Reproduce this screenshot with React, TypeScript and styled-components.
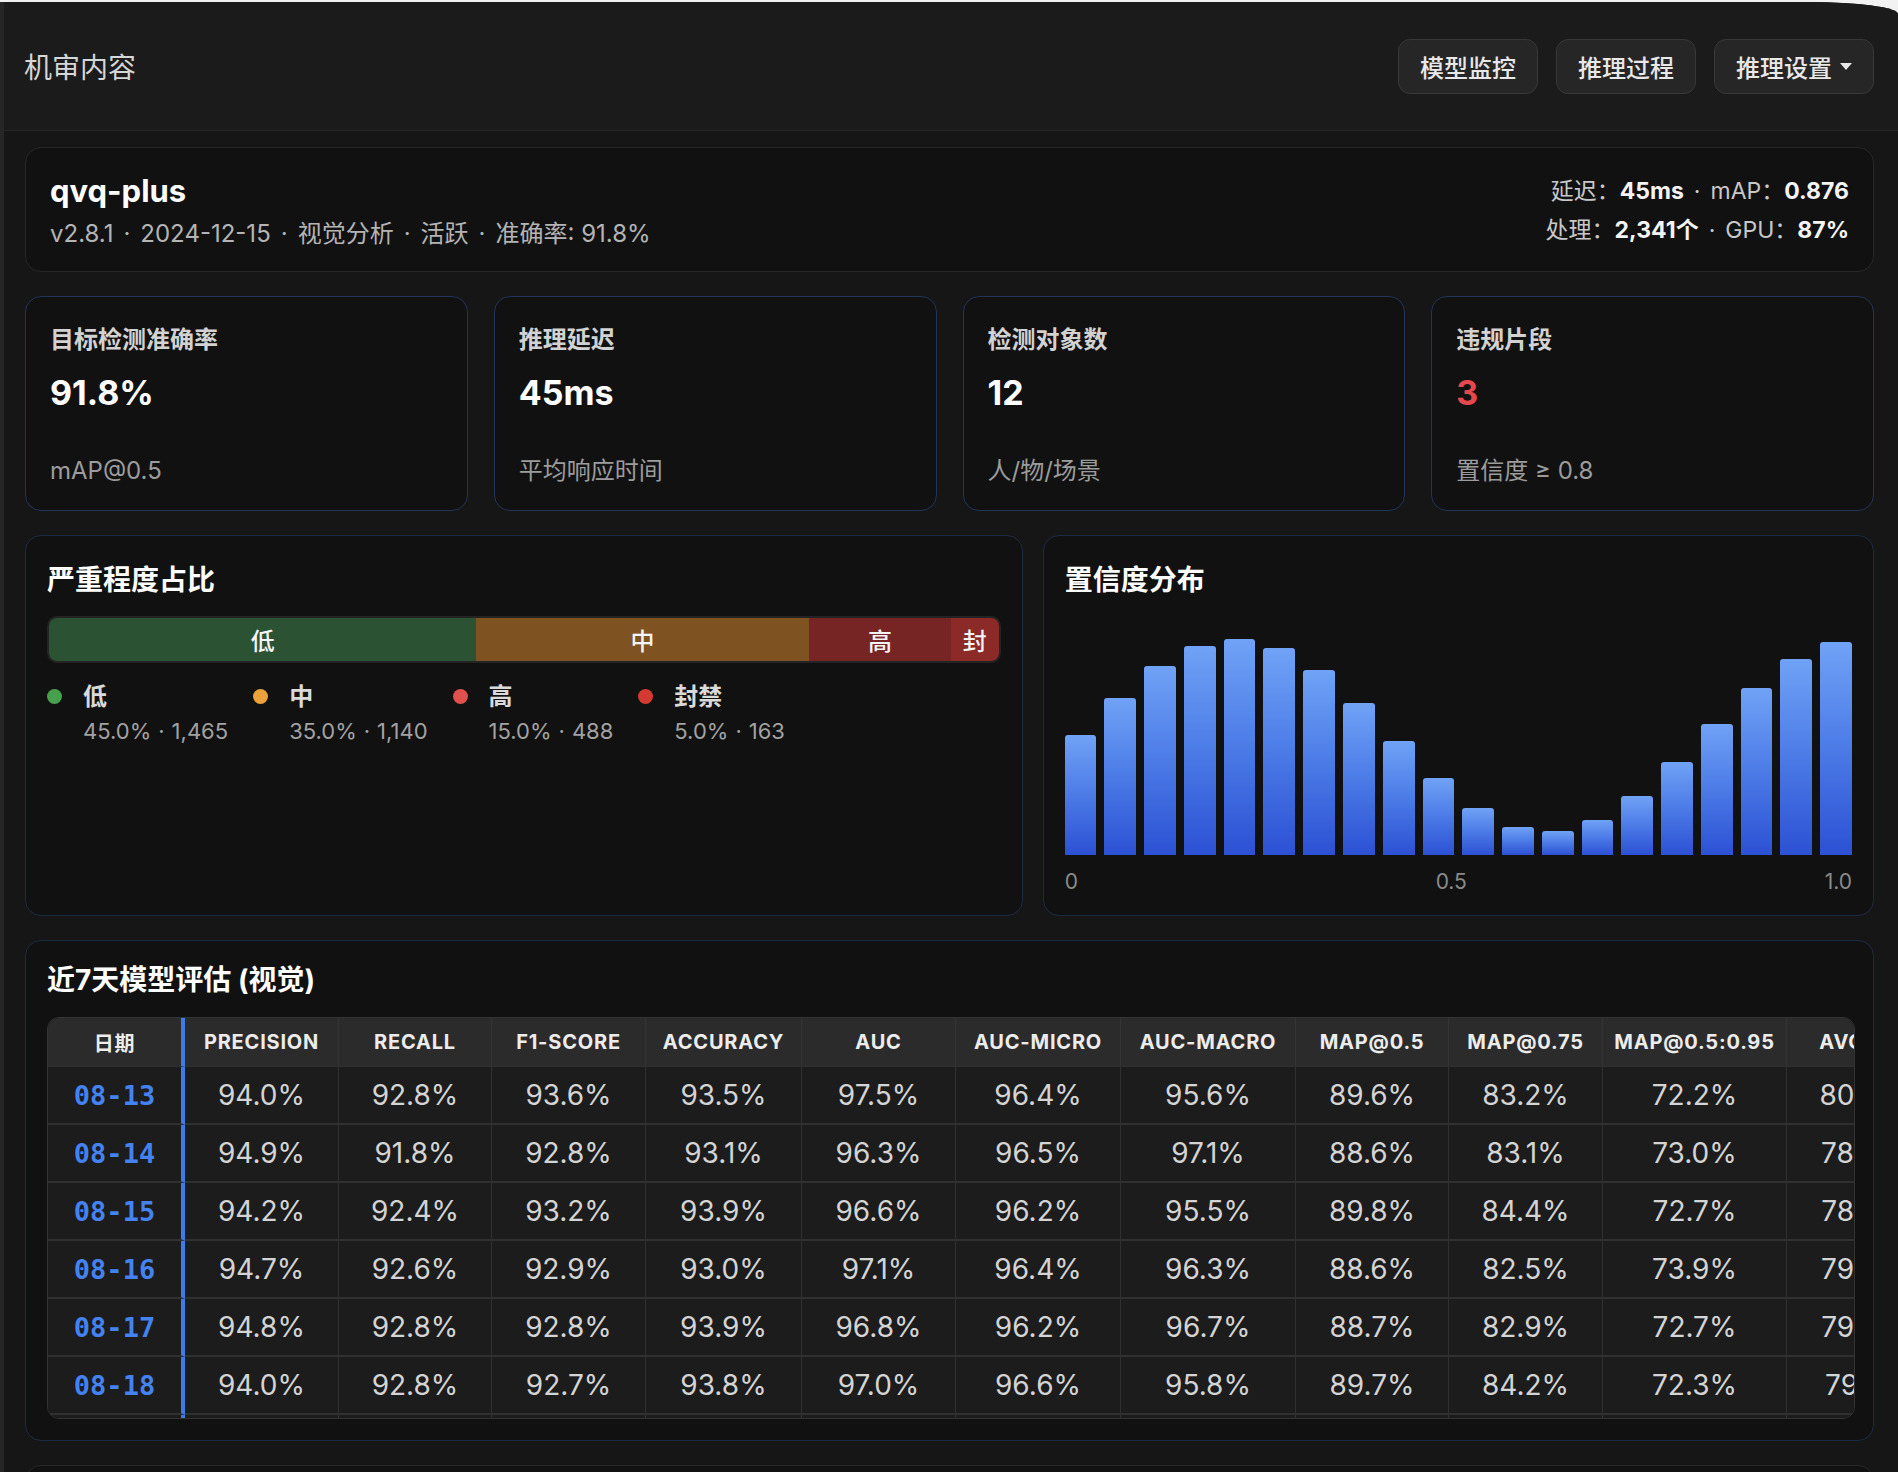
import React from "react";
import styled, { createGlobalStyle } from "styled-components";

const GlobalStyle = createGlobalStyle`
  html, body { margin: 0; padding: 0; background: #f2f2f2; }
  body {
    font-family: Inter, "Noto Sans CJK SC", sans-serif;
    -webkit-font-smoothing: antialiased;
  }
  * { box-sizing: border-box; }
`;

const Shell = styled.div`
  margin-top: 2px;
  min-height: 1470px;
  background: #161616;
  border-left: 4px solid #262626;
  border-top-right-radius: 90px 12px;
  overflow: hidden;
`;

const Header = styled.header`
  height: 129px;
  background: #1b1b1b;
  border-bottom: 1px solid #262626;
  display: flex;
  align-items: center;
  justify-content: space-between;
  padding: 0 24px 0 20px;
`;

const PageTitle = styled.h1`
  margin: 0;
  font-size: 28px;
  font-weight: 400;
  color: #d6d6d6;
`;

const Toolbar = styled.div`
  display: flex;
  gap: 18px;
`;

const ToolButton = styled.button`
  height: 55px;
  padding: 0 21px;
  display: flex;
  align-items: center;
  gap: 8px;
  background: #262626;
  border: 1px solid #383838;
  border-radius: 12px;
  color: #e8e8e8;
  font-family: Inter, "Noto Sans CJK SC", sans-serif;
  font-size: 24px;
  font-weight: 500;
`;

const Caret = styled.span`
  width: 0;
  height: 0;
  border-left: 6px solid transparent;
  border-right: 6px solid transparent;
  border-top: 7px solid #e8e8e8;
`;

const Main = styled.main`
  padding: 16px 24px 0 21px;
  display: flex;
  flex-direction: column;
  gap: 24px;
`;

const Card = styled.section<{ $tone?: "gray" | "navy" | "blue" }>`
  background: #111111;
  border: 1px solid
    ${(p) => (p.$tone === "gray" ? "#272727" : p.$tone === "blue" ? "#22345a" : "#1e2a44")};
  border-radius: 16px;
`;

const ModelCard = styled(Card)`
  height: 125px;
  padding: 23px 24px 20px;
  display: flex;
  justify-content: space-between;
  align-items: flex-start;
`;

const ModelName = styled.div`
  font-size: 31px;
  line-height: 40px;
  font-weight: 700;
  color: #ffffff;
`;

const ModelMeta = styled.div`
  margin-top: 6px;
  font-size: 24px;
  line-height: 34px;
  color: #b4b4b4;
`;

const Sep = styled.span<{ $tight?: boolean }>`
  margin: 0 ${(p) => (p.$tight ? "7px" : "10px")};
`;

const StatLines = styled.div`
  padding-top: 1px;
  text-align: right;
  font-size: 23px;
  line-height: 39px;
  color: #c8c8c8;
`;

const Strong = styled.b`
  font-weight: 700;
  color: #f4f4f4;
`;

const MetricGrid = styled.div`
  display: grid;
  grid-template-columns: repeat(4, 1fr);
  gap: 26px;
`;

const MetricCard = styled(Card)`
  height: 215px;
  padding: 25px 24px 21px;
  display: flex;
  flex-direction: column;
`;

const MetricLabel = styled.div`
  font-size: 24px;
  line-height: 36px;
  font-weight: 600;
  color: #d2d2d2;
`;

const MetricValue = styled.div<{ $alert?: boolean }>`
  margin-top: 13px;
  font-size: 34px;
  line-height: 44px;
  font-weight: 700;
  color: ${(p) => (p.$alert ? "#e5484d" : "#ffffff")};
`;

const MetricSub = styled.div`
  margin-top: auto;
  font-size: 24px;
  line-height: 36px;
  color: #9c9c9c;
`;

const ChartRow = styled.div`
  display: grid;
  grid-template-columns: 6fr 5fr;
  gap: 20px;
`;

const PanelCard = styled(Card)`
  padding: 24px 21px 18px;
  height: 381px;
`;

const SectionTitle = styled.h2`
  margin: 0;
  font-size: 28px;
  line-height: 40px;
  font-weight: 700;
  color: #ffffff;
`;

const StackBar = styled.div`
  margin-top: 16px;
  height: 47px;
  display: flex;
  border: 2px solid #242424;
  border-radius: 10px;
  overflow: hidden;
`;

const Segment = styled.div<{ $color: string }>`
  background: ${(p) => p.$color};
  display: flex;
  align-items: center;
  justify-content: center;
  color: #f4f4f4;
  font-size: 24px;
  font-weight: 500;
  white-space: nowrap;
  overflow: hidden;
`;

const Legend = styled.div`
  margin-top: 16px;
  display: flex;
  gap: 25px;
`;

const LegendItem = styled.div`
  display: grid;
  grid-template-columns: 15px auto;
  column-gap: 21px;
`;

const Dot = styled.span<{ $color: string }>`
  width: 15px;
  height: 15px;
  margin-top: 10px;
  border-radius: 50%;
  background: ${(p) => p.$color};
`;

const LegendLabel = styled.div`
  font-size: 24px;
  line-height: 36px;
  font-weight: 700;
  color: #dadada;
`;

const LegendValue = styled.div`
  font-size: 22px;
  line-height: 32px;
  color: #a2a2a2;
`;

const Bars = styled.div`
  margin-top: 15px;
  height: 240px;
  display: flex;
  align-items: flex-end;
  gap: 8px;
`;

const Bar = styled.div`
  flex: 1;
  border-radius: 3px 3px 0 0;
  background: linear-gradient(180deg, #70a2f6 0%, #4f7fe8 45%, #2c51d4 100%);
`;

const Axis = styled.div`
  margin-top: 12px;
  display: flex;
  justify-content: space-between;
  font-size: 21px;
  line-height: 30px;
  color: #8a8a8a;
`;

const TableCard = styled(Card)`
  height: 501px;
  padding: 19px 18px 21px 21px;
`;

const TableScroll = styled.div`
  margin-top: 17px;
  height: 402px;
  border: 1px solid #333333;
  border-radius: 12px;
  overflow: hidden;
`;

const Table = styled.table`
  table-layout: fixed;
  border-collapse: separate;
  border-spacing: 0;
  width: 2053px;
`;

const Col = styled.col<{ $w: number }>`
  width: ${(p) => p.$w}px;
`;

const Th = styled.th<{ $date?: boolean }>`
  height: 49px;
  padding: 0;
  background: #2b2b2b;
  color: #ececec;
  font-size: 20px;
  font-weight: 700;
  letter-spacing: 0.8px;
  text-transform: uppercase;
  text-align: center;
  white-space: nowrap;
  border-right: ${(p) => (p.$date ? "4px solid #3f7be8" : "1px solid #343434")};
  border-bottom: 1px solid #2f2f2f;
`;

const Td = styled.td<{ $date?: boolean }>`
  height: 58px;
  padding: 0;
  background: #1c1c1c;
  text-align: center;
  white-space: nowrap;
  border-right: ${(p) => (p.$date ? "4px solid #3f7be8" : "1px solid #303030")};
  border-bottom: 2px solid #303030;
  color: ${(p) => (p.$date ? "#4482f0" : "#d4d4d4")};
  font-family: ${(p) =>
    p.$date ? '"DejaVu Sans Mono", monospace' : 'Inter, "Noto Sans CJK SC", sans-serif'};
  font-size: ${(p) => (p.$date ? "27px" : "28px")};
  font-weight: ${(p) => (p.$date ? 700 : 400)};
`;

const NextCard = styled(Card)`
  height: 160px;
`;

const metrics = [
  { label: "目标检测准确率", value: "91.8%", sub: "mAP@0.5" },
  { label: "推理延迟", value: "45ms", sub: "平均响应时间" },
  { label: "检测对象数", value: "12", sub: "人/物/场景" },
  { label: "违规片段", value: "3", sub: "置信度 ≥ 0.8", alert: true },
];

const severity = [
  { key: "低", short: "低", pct: 45, count: "1,465", bar: "#2b5233", dot: "#46a04c" },
  { key: "中", short: "中", pct: 35, count: "1,140", bar: "#7f5222", dot: "#eba23a" },
  { key: "高", short: "高", pct: 15, count: "488", bar: "#772424", dot: "#e0504c" },
  { key: "封禁", short: "封", pct: 5, count: "163", bar: "#8b2a26", dot: "#d43a30" },
];

const confidence = [120, 157, 189, 209, 216, 207, 185, 152, 114, 77, 47, 28, 24, 35, 59, 93, 131, 167, 196, 213];

const columns = [
  { name: "日期", w: 137 },
  { name: "Precision", w: 154 },
  { name: "Recall", w: 153 },
  { name: "F1-Score", w: 154 },
  { name: "Accuracy", w: 156 },
  { name: "AUC", w: 154 },
  { name: "AUC-Micro", w: 165 },
  { name: "AUC-Macro", w: 175 },
  { name: "mAP@0.5", w: 153 },
  { name: "mAP@0.75", w: 154 },
  { name: "mAP@0.5:0.95", w: 184 },
  { name: "Avg IoU", w: 154 },
  { name: "FPS", w: 160 },
];

const rows = [
  ["08-13", "94.0%", "92.8%", "93.6%", "93.5%", "97.5%", "96.4%", "95.6%", "89.6%", "83.2%", "72.2%", "80.4%", "41"],
  ["08-14", "94.9%", "91.8%", "92.8%", "93.1%", "96.3%", "96.5%", "97.1%", "88.6%", "83.1%", "73.0%", "78.9%", "42"],
  ["08-15", "94.2%", "92.4%", "93.2%", "93.9%", "96.6%", "96.2%", "95.5%", "89.8%", "84.4%", "72.7%", "78.6%", "40"],
  ["08-16", "94.7%", "92.6%", "92.9%", "93.0%", "97.1%", "96.4%", "96.3%", "88.6%", "82.5%", "73.9%", "79.2%", "43"],
  ["08-17", "94.8%", "92.8%", "92.8%", "93.9%", "96.8%", "96.2%", "96.7%", "88.7%", "82.9%", "72.7%", "79.5%", "41"],
  ["08-18", "94.0%", "92.8%", "92.7%", "93.8%", "97.0%", "96.6%", "95.8%", "89.7%", "84.2%", "72.3%", "79.1%", "42"],
  ["08-19", "94.3%", "92.5%", "93.0%", "93.4%", "96.9%", "96.3%", "96.0%", "89.1%", "83.6%", "72.9%", "79.8%", "41"],
];

export default function App() {
  return (
    <>
      <GlobalStyle />
      <Shell>
        <Header>
          <PageTitle>机审内容</PageTitle>
          <Toolbar>
            <ToolButton>模型监控</ToolButton>
            <ToolButton>推理过程</ToolButton>
            <ToolButton>
              推理设置
              <Caret />
            </ToolButton>
          </Toolbar>
        </Header>
        <Main>
          <ModelCard $tone="gray">
            <div>
              <ModelName>qvq-plus</ModelName>
              <ModelMeta>
                v2.8.1<Sep>·</Sep>2024-12-15<Sep>·</Sep>视觉分析<Sep>·</Sep>活跃<Sep>·</Sep>准确率: 91.8%
              </ModelMeta>
            </div>
            <StatLines>
              <div>
                延迟：<Strong>45ms</Strong>
                <Sep>·</Sep>mAP：<Strong>0.876</Strong>
              </div>
              <div>
                处理：<Strong>2,341个</Strong>
                <Sep>·</Sep>GPU：<Strong>87%</Strong>
              </div>
            </StatLines>
          </ModelCard>

          <MetricGrid>
            {metrics.map((m) => (
              <MetricCard key={m.label} $tone="blue">
                <MetricLabel>{m.label}</MetricLabel>
                <MetricValue $alert={m.alert}>{m.value}</MetricValue>
                <MetricSub>{m.sub}</MetricSub>
              </MetricCard>
            ))}
          </MetricGrid>

          <ChartRow>
            <PanelCard>
              <SectionTitle>严重程度占比</SectionTitle>
              <StackBar>
                {severity.map((s) => (
                  <Segment key={s.key} $color={s.bar} style={{ width: `${s.pct}%` }}>
                    {s.short}
                  </Segment>
                ))}
              </StackBar>
              <Legend>
                {severity.map((s) => (
                  <LegendItem key={s.key}>
                    <Dot $color={s.dot} />
                    <div>
                      <LegendLabel>{s.key}</LegendLabel>
                      <LegendValue>
                        {s.pct.toFixed(1)}%<Sep $tight>·</Sep>
                        {s.count}
                      </LegendValue>
                    </div>
                  </LegendItem>
                ))}
              </Legend>
            </PanelCard>
            <PanelCard>
              <SectionTitle>置信度分布</SectionTitle>
              <Bars>
                {confidence.map((h, i) => (
                  <Bar key={i} style={{ height: `${(h / 240) * 100}%` }} />
                ))}
              </Bars>
              <Axis>
                <span>0</span>
                <span>0.5</span>
                <span>1.0</span>
              </Axis>
            </PanelCard>
          </ChartRow>

          <TableCard>
            <SectionTitle>近7天模型评估 (视觉)</SectionTitle>
            <TableScroll>
              <Table>
                <colgroup>
                  {columns.map((c) => (
                    <Col key={c.name} $w={c.w} />
                  ))}
                </colgroup>
                <thead>
                  <tr>
                    {columns.map((c, i) => (
                      <Th key={c.name} $date={i === 0}>
                        {c.name}
                      </Th>
                    ))}
                  </tr>
                </thead>
                <tbody>
                  {rows.map((r) => (
                    <tr key={r[0]}>
                      {r.map((v, i) => (
                        <Td key={i} $date={i === 0}>
                          {v}
                        </Td>
                      ))}
                    </tr>
                  ))}
                </tbody>
              </Table>
            </TableScroll>
          </TableCard>

          <NextCard $tone="gray" />
        </Main>
      </Shell>
    </>
  );
}
